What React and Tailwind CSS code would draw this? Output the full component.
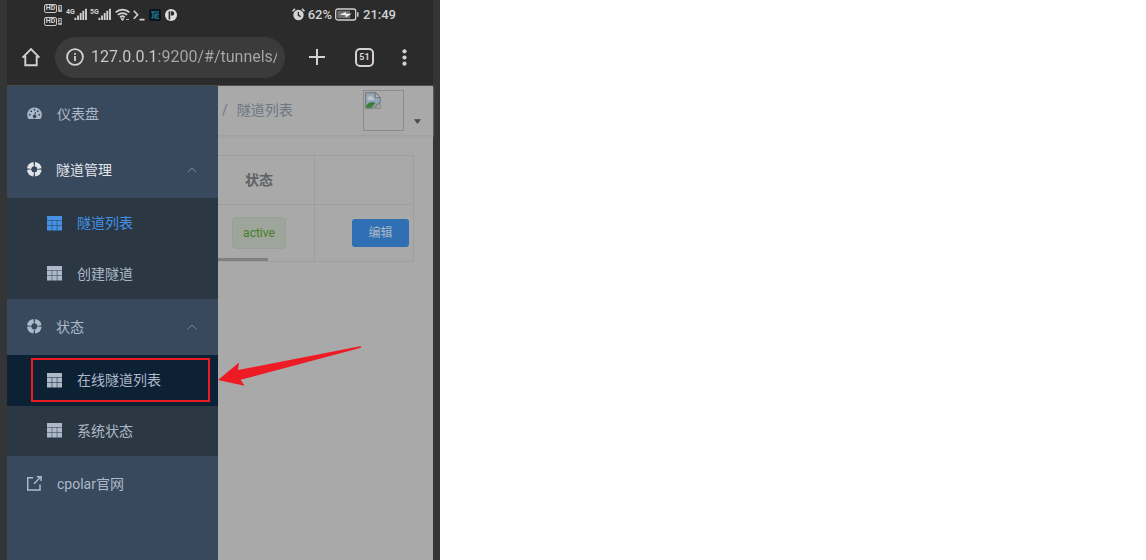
import React from 'react';

function GaugeIcon() {
  return (
    <svg viewBox="0 0 15 13" className="h-[13px] w-[15px] shrink-0" aria-hidden="true">
      <path
        fill="currentColor"
        d="M7.5 .5A7.3 7.3 0 0 0 1.3 11.6Q1.6 12.1 2.2 12.1H12.8Q13.4 12.1 13.7 11.6A7.3 7.3 0 0 0 7.5 .5Z"
      />
      <g fill="#38485d">
        <circle cx="2.7" cy="7.7" r=".95" />
        <circle cx="4.2" cy="4.2" r=".95" />
        <circle cx="7.5" cy="2.7" r=".95" />
        <circle cx="10.8" cy="4.2" r=".95" />
        <circle cx="12.3" cy="7.7" r=".95" />
        <path d="M8.2 4.7l.8.2-.6 3.1a1.7 1.7 0 1 1-1-.2Z" />
      </g>
    </svg>
  );
}

function RingIcon() {
  return (
    <svg viewBox="0 0 15 15" className="h-[15px] w-[15px] shrink-0" aria-hidden="true">
      <g fill="none" stroke="currentColor" strokeWidth="4.2">
        <path d="M7.9 2.1A5.3 5.3 0 0 1 12.5 6.6" />
        <path d="M12.5 7.6A5.3 5.3 0 0 1 7.9 12.4" />
        <path d="M6.7 12.4A5.3 5.3 0 0 1 2.1 7.6" />
        <path d="M2.1 6.6A5.3 5.3 0 0 1 6.7 2.1" />
      </g>
    </svg>
  );
}

function GridIcon() {
  return (
    <svg viewBox="0 0 15 15" className="h-[15px] w-[15px] shrink-0" fill="currentColor" aria-hidden="true">
      <path d="M0 0h15v4H0zM0 4.6h4.7v4.6H0zM5.2 4.6h4.6v4.6H5.2zM10.3 4.6H15v4.6h-4.7zM0 9.8h4.7v4.6H0zM5.2 9.8h4.6v4.6H5.2zM10.3 9.8H15v4.6h-4.7z" />
    </svg>
  );
}

function ExternalIcon() {
  return (
    <svg viewBox="0 0 15 15" className="h-[15px] w-[15px] shrink-0" fill="none" stroke="currentColor" strokeWidth="1.5" aria-hidden="true">
      <path d="M6.2 1.7H.7v12.3h12.3V8.5M7 7.8l6.8-6.8M9.8 .8h4.3v4.3" />
    </svg>
  );
}

function ChevronUp() {
  return (
    <svg viewBox="0 0 10 6" className="ml-auto h-[6px] w-[10px] text-[#7d8998]" fill="none" stroke="currentColor" aria-hidden="true">
      <path d="M.7 5.2 5 1l4.3 4.2" />
    </svg>
  );
}

function Signal({ label }) {
  return (
    <span className="flex items-end">
      <span className="w-2 self-start text-[7px] leading-[8px] font-bold">{label}</span>
      <svg viewBox="0 0 14 13" className="h-[13px] w-[13px]" fill="currentColor" aria-hidden="true">
        <path d="M.5 10h2v2.5h-2zM3.4 7.5h2v5h-2zM6.2 5h2v7.5h-2zM9 2.5h2v10H9zM11.9 .3h2v12.2h-2z" />
      </svg>
    </span>
  );
}

function HdBadge({ sim }) {
  return (
    <span className="flex items-center gap-px">
      <span className="flex h-[9px] w-[13px] items-center justify-center rounded-[2px] border border-[#c8c8c8] text-[7px] leading-none font-bold">HD</span>
      <span className="flex h-[7px] w-[4px] items-center justify-center rounded-[1px] bg-[#b5b5b5] text-[6px] leading-none font-bold text-[#222]">{sim}</span>
    </span>
  );
}

function StatusBar() {
  return (
    <div className="flex h-[29px] items-center pr-[37px] pl-[37px] text-[#d2d2d2]">
      <div className="flex flex-col gap-1">
        <HdBadge sim="1" />
        <HdBadge sim="2" />
      </div>
      <div className="ml-1 flex gap-[3px]">
        <Signal label="4G" />
        <Signal label="5G" />
      </div>
      <svg viewBox="0 0 15 13" className="ml-[4px] h-[13px] w-[15px]" fill="none" stroke="currentColor" strokeWidth="1.8" aria-hidden="true">
        <path d="M.6 4.3a10 10 0 0 1 13.8 0M2.9 6.9a6.6 6.6 0 0 1 9.2 0M5.1 9.3a3.4 3.4 0 0 1 4.6 0" />
        <path d="M6 10.7h3L7.5 12.6zM11 11.5h3" fill="currentColor" strokeWidth=".8" />
      </svg>
      <svg viewBox="0 0 12 12" className="ml-[3px] h-[12px] w-[12px]" fill="none" stroke="currentColor" strokeWidth="1.6" aria-hidden="true">
        <path d="M.8 1.8 4.6 5.8.8 9.8M6.5 10.6h5" />
      </svg>
      <svg viewBox="0 0 12 12" className="ml-[4px] h-[12px] w-[12px]" aria-hidden="true">
        <rect width="12" height="12" rx="2" fill="#0b161c" />
        <path d="M2 3h8M4 3v6H2.3M6 5v4.2h4M6.2 5.2H10M6.2 7h3" fill="none" stroke="#2693b5" />
      </svg>
      <svg viewBox="0 0 12 12" className="ml-[4px] h-[12px] w-[12px]" aria-hidden="true">
        <circle cx="6" cy="6" r="6" fill="#dcdcdc" />
        <path d="M4.4 10.4V2.4" fill="none" stroke="#2b2b2b" strokeWidth="1.6" />
        <path d="M5.8 2.2H7a2.2 2.2 0 0 1 0 4.4H5.8z" fill="#2b2b2b" />
      </svg>
      <div className="ml-auto flex items-center font-['Roboto','Liberation_Sans',sans-serif] text-[13px] leading-4 font-medium">
        <svg viewBox="0 0 13 13" className="mr-[3px] h-[13px] w-[13px]" aria-hidden="true">
          <circle cx="6.5" cy="7" r="5.2" fill="#d2d2d2" />
          <path d="M.5 3.3 3 .9M12.5 3.3 10 .9" stroke="#d2d2d2" strokeWidth="1.5" />
          <path d="M6.4 4v3.4l2.3 1.2" fill="none" stroke="#2b2b2b" strokeWidth="1.3" />
        </svg>
        <span>62%</span>
        <svg viewBox="0 0 24 13" className="mr-1 ml-[3px] h-[13px] w-[24px]" aria-hidden="true">
          <rect x=".7" y="1" width="20" height="11" rx="2" fill="none" stroke="#d2d2d2" strokeWidth="1.3" />
          <rect x="2.5" y="2.8" width="12.5" height="7.4" fill="#6e6e6e" />
          <path d="M4.5 6.6 11 4v1.8h5.8L10.6 9.4V7.3Z" fill="#eee" />
          <path d="M22.8 4.3v4.4" stroke="#d2d2d2" strokeWidth="1.4" />
        </svg>
        <span>21:49</span>
      </div>
    </div>
  );
}

function BrowserBar() {
  return (
    <div className="flex h-14 items-center pr-[26px] pl-[14px] text-[#d2d2d2]">
      <button type="button" aria-label="Home">
        <svg viewBox="0 0 20 20" className="h-5 w-5" fill="none" stroke="currentColor" strokeWidth="1.9" aria-hidden="true">
          <path d="M4.3 9v9.2h11.4V9M1.6 10.6 10 2.2l8.4 8.4" />
        </svg>
      </button>
      <div className="ml-[14px] flex h-[41px] min-w-0 flex-1 items-center rounded-full bg-[#3b3b3b] pr-2 pl-[11px]">
        <svg viewBox="0 0 18 18" className="h-[18px] w-[18px] shrink-0" fill="none" stroke="currentColor" strokeWidth="1.8" aria-hidden="true">
          <circle cx="9" cy="9" r="7.9" />
          <path d="M9 8v5M9 4.9v1.8" />
        </svg>
        <input
          aria-label="Address"
          readOnly
          value="127.0.0.1:9200/#/tunnels/"
          className="ml-[7px] w-0 flex-1 bg-[linear-gradient(90deg,#cdcdcd_66px,#a8a8a8_66px)] bg-clip-text font-['Roboto','Liberation_Sans',sans-serif] text-[16px] leading-6 text-transparent outline-none"
        />
      </div>
      <button type="button" aria-label="New tab" className="ml-6">
        <svg viewBox="0 0 16 16" className="h-4 w-4" stroke="currentColor" strokeWidth="2" aria-hidden="true">
          <path d="M8 0v16M0 8h16" />
        </svg>
      </button>
      <button
        type="button"
        className="ml-[30px] flex h-[19px] w-[19px] items-center justify-center rounded-[5px] border-2 border-[#d2d2d2] font-['Roboto','Liberation_Sans',sans-serif] text-[9px] leading-none font-bold"
      >
        51
      </button>
      <button type="button" aria-label="More" className="ml-7">
        <svg viewBox="0 0 5 17" className="h-[17px] w-[5px]" fill="currentColor" aria-hidden="true">
          <circle cx="2.5" cy="2.3" r="2.1" />
          <circle cx="2.5" cy="8.5" r="2.1" />
          <circle cx="2.5" cy="14.7" r="2.1" />
        </svg>
      </button>
    </div>
  );
}

function SubLink({ children, className = 'text-[#adb9c8]' }) {
  return (
    <a href="#/tunnels" className={`flex items-center gap-[15px] pl-10 ${className}`}>
      <GridIcon />
      {children}
    </a>
  );
}

function Sidebar() {
  return (
    <nav className="relative z-10 w-[211px] shrink-0 bg-[#38485d] text-sm text-[#adb9c8]">
      <a href="#/dashboard" className="flex h-14 items-center gap-[15px] pb-px pl-5">
        <GaugeIcon />
        仪表盘
      </a>
      <button type="button" className="flex h-14 w-full items-center gap-[14px] pr-[21px] pb-px pl-5 text-[#e2e5e9]">
        <RingIcon />
        隧道管理
        <ChevronUp />
      </button>
      <div className="grid h-[101px] grid-rows-2 bg-[#2b3844]">
        <SubLink className="text-[#4392e6]">隧道列表</SubLink>
        <SubLink>创建隧道</SubLink>
      </div>
      <button type="button" className="flex h-14 w-full items-center gap-[14px] pr-[21px] pb-px pl-5">
        <RingIcon />
        状态
        <ChevronUp />
      </button>
      <div className="relative grid h-[101px] grid-rows-2 bg-[#2b3844]">
        <SubLink className="bg-[#0d2135] text-[#adb9c8]">在线隧道列表</SubLink>
        <SubLink>系统状态</SubLink>
        <div className="pointer-events-none absolute top-[3px] left-6 h-11 w-[179px] border-2 border-[#ed1c24]" />
        <svg viewBox="0 0 143 41" className="pointer-events-none absolute -top-[9px] left-[211px] h-[41px] w-[143px] max-w-none" aria-hidden="true">
          <path fill="#ed1c24" d="M0 34 21 16.5 20 24 142 .2 143 .6V1.7L22.7 33.7 26.5 39.8Z" />
        </svg>
      </div>
      <a href="https://www.cpolar.com" className="flex h-14 items-center gap-[15px] pb-px pl-5">
        <ExternalIcon />
        cpolar官网
      </a>
    </nav>
  );
}

function BrokenImage() {
  return (
    <div role="img" aria-label="avatar" className="h-[41px] w-[41px] border border-[#8b8b8b] p-px">
      <svg viewBox="0 0 16 17" className="h-[17px] w-4" aria-hidden="true">
        <path d="M.7.7h9.6l5 5v4L7.6 16.3H.7z" fill="#91a5bd" stroke="#737373" />
        <path d="M10.3.7v5h5z" fill="#b8b8b8" stroke="#737373" />
        <path d="M2.6 7.4a1.8 1.8 0 0 1 1.7-2.8 2 2 0 0 1 3.7 1.1 1.3 1.3 0 0 1 0 2.5H3z" fill="#bbc2ca" />
        <path d="M1.2 15.8v-2.3Q4 9.7 7 10l3.7.7-4.6 5.1z" fill="#3e7f35" />
        <path d="M15.3 11v5.3H9.8z" fill="#aaa" stroke="#737373" strokeWidth=".7" />
      </svg>
    </div>
  );
}

function MainPanel() {
  return (
    <main className="min-w-0 flex-1 bg-[#a9a9a9]">
      <header className="flex h-[50px] items-start border-b border-[#a1a1a2] pt-1 pr-3 pl-1 shadow-[0_1px_2px_#a1a1a2]">
        <div className="flex h-[39px] items-center gap-[9px] text-sm text-[#6d7784]">
          <span>/</span>
          <span>隧道列表</span>
        </div>
        <button type="button" aria-label="User menu" className="ml-auto flex items-end gap-[10px]">
          <BrokenImage />
          <svg viewBox="0 0 7 5" className="mb-[7px] h-[5px] w-[7px]" fill="#484a4d" aria-hidden="true">
            <path d="M0 .3h7L3.5 5z" />
          </svg>
        </button>
      </header>
      <section className="pt-[19px] pr-[19px]">
        <div className="relative">
          <table className="w-full table-fixed border-separate border-spacing-0 border-t border-r border-[#9d9ea3] text-sm">
            <thead>
              <tr className="h-[49px]">
                <th className="w-[97px] border-r border-b border-[#9d9ea3] pr-[14px] text-center font-bold text-[#606266]">状态</th>
                <th className="border-b border-[#9d9ea3]" aria-label="操作" />
              </tr>
            </thead>
            <tbody>
              <tr className="h-[57px]">
                <td className="border-r border-b border-[#9d9ea3] pr-[14px] text-center">
                  <span className="inline-flex h-8 items-center rounded border border-[#99a196] bg-[#9ea59b] px-[10px] text-[12px] leading-none text-[#447f29]">active</span>
                </td>
                <td className="border-b border-[#9d9ea3] pr-1 text-right">
                  <button type="button" className="h-7 w-[57px] rounded-[3px] bg-[#2f6fb3] text-[12px] leading-none text-[#aab7c5]">编辑</button>
                </td>
              </tr>
            </tbody>
          </table>
          <div className="absolute bottom-px left-0 h-[3px] w-[50px] bg-[#808080]" />
        </div>
      </section>
    </main>
  );
}

export default function App() {
  return (
    <div className="min-h-screen bg-white">
      <div className="flex min-h-screen w-full max-w-[440px] flex-col bg-[#343536] px-[7px] font-['Roboto','Noto_Sans_CJK_SC',sans-serif]">
        <div className="border-b border-[#4b4b4b] bg-[#2b2b2b]">
          <StatusBar />
          <BrowserBar />
        </div>
        <div className="flex flex-1">
          <Sidebar />
          <MainPanel />
        </div>
      </div>
    </div>
  );
}
